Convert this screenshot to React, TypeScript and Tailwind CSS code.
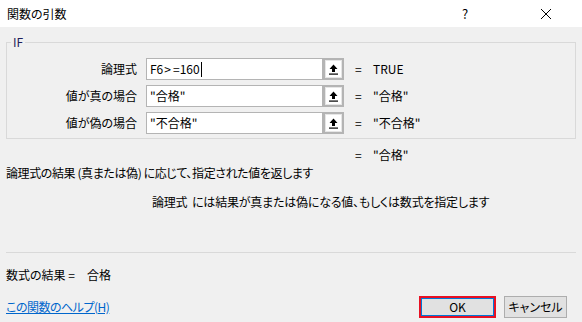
import React from 'react';

const font = { fontFamily: '"Noto Sans CJK JP", "Noto Sans", sans-serif' };

function RefButton() {
  return (
    <div className="w-[21px] h-[22px] border-2 border-[#b4b4b4] bg-[#e6e6e6] flex items-center justify-center">
      <div className="w-[15px] h-[16px] bg-white flex items-center justify-center">
        <svg width="9" height="11" viewBox="0 0 9 11">
          <path d="M4.5 0.5 L8.5 5 L6 5 L6 8 L3 8 L3 5 L0.5 5 Z" fill="#000" />
          <rect x="0" y="9.5" width="9" height="1.2" fill="#000" />
        </svg>
      </div>
    </div>
  );
}

function ArgRow({ label, value, result, caret }: { label: string; value: React.ReactNode; result: string; caret?: boolean }) {
  return (
    <div className="flex items-center h-[22px]">
      <div className="w-[139px] text-right pr-[9px]">{label}</div>
      <div className="w-[177px] h-[22px] bg-white border border-[#b4b4b4] flex items-center pl-[3px]">
        <span>{value}</span>
        {caret && <span className="inline-block w-px h-[15px] bg-black ml-px" />}
      </div>
      <RefButton />
      <div className="w-[29px] pl-[11px]">=</div>
      <div>{result}</div>
    </div>
  );
}

export default function App() {
  return (
    <div className="w-[582px] h-[322px] bg-[#f0f0f0] text-[12px] text-black leading-none overflow-hidden [font-feature-settings:'palt']" style={font}>
      <div className="h-[27px] bg-white flex items-center pl-[7px]">
        <span className="flex-1">関数の引数</span>
        <span className="w-[20px] text-[13px]">?</span>
        <svg width="12" height="12" viewBox="0 0 12 12" className="ml-[58px] mr-[30px]">
          <path d="M1 1 L11 11 M11 1 L1 11" stroke="#000" strokeWidth="1" />
        </svg>
      </div>

      <div className="relative mx-[6px] mt-[15px] h-[97px] border border-[#d9d9d9] pt-[15px] flex flex-col gap-[5px]">
        <span className="absolute left-[4px] top-[-7px] bg-[#f0f0f0] px-[2px] text-[#1e1e5a]">IF</span>
        <ArgRow
          label="論理式"
          value={<>F6<span className="pl-px pr-[2px]">&gt;</span>=160</>}
          result="TRUE"
          caret
        />
        <ArgRow label="値が真の場合" value={'"合格"'} result={'"合格"'} />
        <ArgRow label="値が偽の場合" value={'"不合格"'} result={'"不合格"'} />
      </div>

      <div className="flex mt-[10px] pl-[355px]">
        <span className="w-[18px]">=</span>
        <span>"合格"</span>
      </div>
      <div className="mt-[6px] pl-[6px] tracking-[-0.4px]">論理式の結果 (真または偽) に応じて、指定された値を返します</div>
      <div className="mt-[17px] pl-[152px] flex tracking-[-0.2px]">
        <span className="w-[40px]">論理式</span>
        <span>には結果が真または偽になる値、もしくは数式を指定します</span>
      </div>

      <div className="mx-[6px] mt-[44px] border-t border-[#d9d9d9]" />
      <div className="mt-[16px] pl-[6px] flex">
        <span className="w-[81px]">数式の結果 =</span>
        <span>合格</span>
      </div>

      <div className="mt-[15px] flex items-center pl-[6px]">
        <a className="text-[#0066cc] underline flex-1 tracking-[-0.5px]">この関数のヘルプ(H)</a>
        <button className="w-[77px] h-[22px] border-2 border-[#e81123] bg-[#e1e1e1] flex items-center justify-center">
          <span className="w-full h-full border border-[#0078d7] flex items-center justify-center">OK</span>
        </button>
        <button className="ml-[8px] mr-[15px] w-[63px] h-[22px] border border-[#adadad] bg-[#e1e1e1]">キャンセル</button>
      </div>
    </div>
  );
}
